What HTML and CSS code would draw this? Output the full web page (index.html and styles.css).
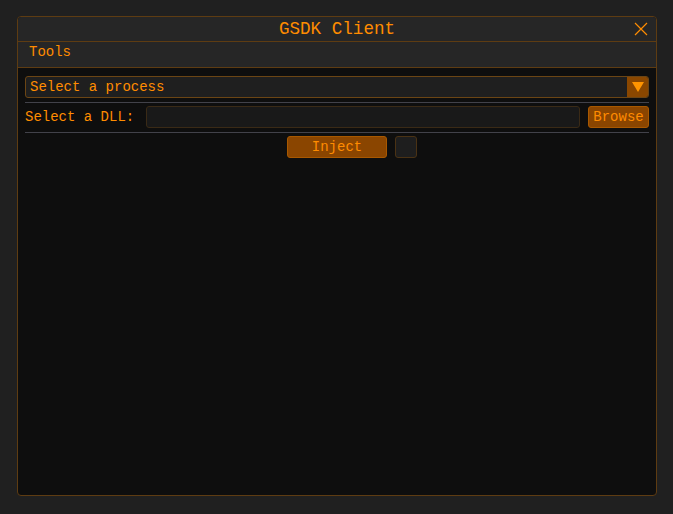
FILE: index.html
```html
<!DOCTYPE html>
<html lang="en">
<head>
    <meta charset="UTF-8">
    <title>GSDK Client</title>
    <link rel="stylesheet" href="styles.css">
</head>
<body>
    <div class="window">
        <div class="title-bar">
            <span class="title">GSDK Client</span>
            <svg class="close" width="14" height="14" viewBox="0 0 14 14">
                <path d="M1 1 L13 13 M13 1 L1 13" stroke="#ff8c00" stroke-width="1.2" fill="none"/>
            </svg>
        </div>
        <div class="menu-bar">
            <span class="menu-item">Tools</span>
        </div>
        <div class="content">
            <div class="combo">
                <span class="combo-text">Select a process</span>
                <div class="combo-arrow">
                    <svg width="12" height="10" viewBox="0 0 12 10">
                        <path d="M0 0 L12 0 L6 10 Z" fill="#ff9500"/>
                    </svg>
                </div>
            </div>
            <div class="separator"></div>
            <div class="dll-row">
                <span class="label">Select a DLL:</span>
                <div class="text-input"></div>
                <button class="btn browse">Browse</button>
            </div>
            <div class="separator"></div>
            <div class="inject-row">
                <div></div>
                <button class="btn inject">Inject</button>
                <div class="checkbox"></div>
            </div>
        </div>
    </div>
</body>
</html>
```

FILE: styles.css
```css
body {
    margin: 0;
    padding: 16px 17px;
    background-color: #202020;
    font-family: "Liberation Mono", "DejaVu Sans Mono", monospace;
    font-size: 14px;
    color: #ff8c00;
}
.window {
    width: 640px;
    height: 480px;
    box-sizing: border-box;
    border: 1px solid #5e3c12;
    border-radius: 4px;
    background-color: #0e0e0e;
    display: flex;
    flex-direction: column;
    overflow: hidden;
}
.title-bar {
    height: 24px;
    background-color: #262626;
    border-bottom: 1px solid #5e3c12;
    display: flex;
    align-items: center;
    justify-content: center;
    position: relative;
}
.title {
    font-size: 17.6px;
    line-height: 24px;
}
.close {
    position: absolute;
    right: 8px;
    top: 5px;
}
.menu-bar {
    height: 25px;
    background-color: #262626;
    border-bottom: 1px solid #5e3c12;
    display: flex;
    align-items: center;
    padding: 0 11px;
}
.menu-item {
    line-height: 25px;
    margin-top: -4px;
}
.content {
    flex: 1;
    padding: 8px 7px;
    display: flex;
    flex-direction: column;
}
.combo {
    height: 22px;
    box-sizing: border-box;
    border: 1px solid #6b4514;
    border-radius: 3px;
    background-color: #1f1f1f;
    display: flex;
    align-items: center;
    overflow: hidden;
}
.combo-text {
    flex: 1;
    padding-left: 4px;
}
.combo-arrow {
    width: 21px;
    height: 100%;
    background-color: #8a4700;
    display: flex;
    align-items: center;
    justify-content: center;
}
.separator {
    height: 1px;
    background-color: #42424a;
    margin: 4px 0 3px;
}
.dll-row {
    display: flex;
    align-items: center;
    gap: 8px;
    height: 22px;
}
.label {
    width: 113px;
}
.text-input {
    flex: 1;
    height: 22px;
    box-sizing: border-box;
    border: 1px solid #3a2a16;
    border-radius: 3px;
    background-color: #191919;
}
.btn {
    height: 22px;
    box-sizing: border-box;
    border: 1px solid #a85800;
    border-radius: 3px;
    background-color: #8a4500;
    color: #ff8c00;
    font-family: inherit;
    font-size: 14px;
    padding: 0;
}
.browse {
    width: 61px;
}
.inject-row {
    display: grid;
    grid-template-columns: 1fr 100px 1fr;
    height: 22px;
}
.inject {
    width: 100px;
}
.checkbox {
    width: 22px;
    height: 22px;
    box-sizing: border-box;
    margin-left: 8px;
    border: 1px solid #4a3214;
    border-radius: 3px;
    background-color: #1e1e1e;
}
```
